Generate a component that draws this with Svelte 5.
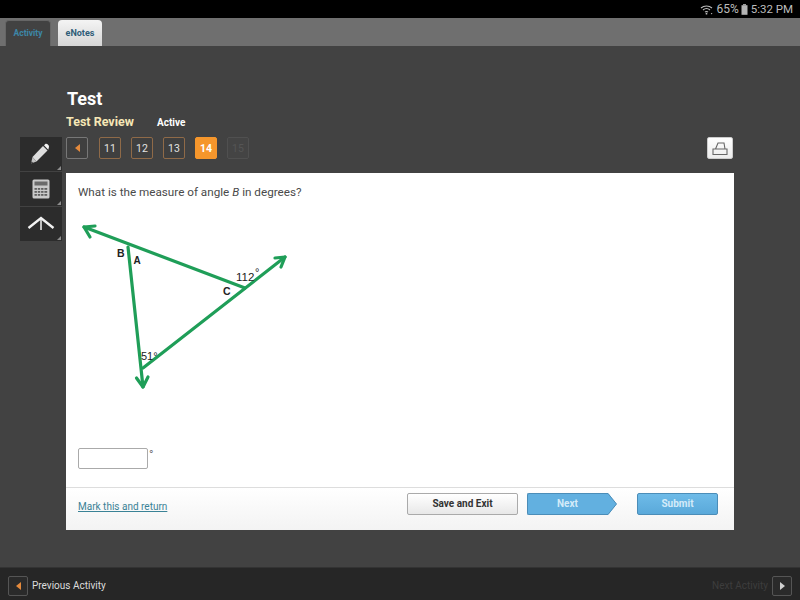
<script>
  const pages = [
    { n: 11, cls: '' },
    { n: 12, cls: '' },
    { n: 13, cls: '' },
    { n: 14, cls: 'current' },
    { n: 15, cls: 'locked' }
  ];
</script>

<div class="screen">
  <header class="status">
    <svg class="wifi" viewBox="0 0 14 11" width="14" height="11" aria-hidden="true">
      <path d="M1 4 A8.5 8.5 0 0 1 12 4 M3 6 A5.5 5.5 0 0 1 10 6 M5 8 A2.6 2.6 0 0 1 8 8" fill="none" stroke="#bdbdbd" stroke-width="1.1"/>
      <circle cx="6.5" cy="9.7" r="0.9" fill="#bdbdbd"/>
      <circle cx="11.6" cy="9.6" r="0.7" fill="#bdbdbd"/>
    </svg>
    <span class="pct">65%</span>
    <svg class="batt" viewBox="0 0 7 11" width="7" height="11" aria-hidden="true">
      <rect x="2" y="0" width="3" height="1.4" fill="#9c9c9c"/>
      <rect x="0.5" y="1.2" width="6" height="9.6" fill="#b5b5b5"/>
    </svg>
    <span class="clock">5:32 PM</span>
  </header>

  <nav class="tabs">
    <div class="tab active">Activity</div>
    <div class="tab light">eNotes</div>
  </nav>

  <main class="main">
    <aside class="tools">
      <div class="tool">
        <svg viewBox="0 0 22 22" width="22" height="22" aria-hidden="true">
          <path d="M6.500 18.500 L17.500 7.500 L13 3 L2.500 14 Z" fill="#dedede"/>
          <path d="M14 2.200 L15.600 0.800 Q16.800 0.400 18.600 2.200 Q19.400 3.800 18.700 5 L18.300 6.700 Z" fill="#f4f4f4"/>
          <path d="M2.500 14 L6.500 18.500 L1 20.500 Z" fill="#c4c4c4"/>
          <path d="M1.700 18.500 L3 19.600 L1 20.500 Z" fill="#222"/>
        </svg>
      </div>
      <div class="tool">
        <svg viewBox="0 0 18 20" width="18" height="20" aria-hidden="true">
          <rect x="0.5" y="0.5" width="17" height="19" rx="1.5" fill="#c9c9c9"/>
          <rect x="2.5" y="2.500" width="13" height="4" fill="#6a6a6a"/>
          <g fill="#5f5f5f">
            <rect x="2.5" y="9" width="2.4" height="1.8"/><rect x="5.8" y="9" width="2.4" height="1.8"/><rect x="9.1" y="9" width="2.4" height="1.8"/><rect x="12.4" y="9" width="2.8" height="1.8"/>
            <rect x="2.5" y="12" width="2.4" height="1.8"/><rect x="5.8" y="12" width="2.4" height="1.8"/><rect x="9.1" y="12" width="2.4" height="1.8"/><rect x="12.4" y="12" width="2.8" height="1.8"/>
            <rect x="2.5" y="15" width="2.4" height="1.8"/><rect x="5.8" y="15" width="2.4" height="1.8"/><rect x="9.1" y="15" width="2.4" height="1.8"/><rect x="12.4" y="15" width="2.8" height="1.8"/>
          </g>
        </svg>
      </div>
      <div class="tool">
        <svg class="peak" viewBox="0 0 28 16" width="28" height="16" aria-hidden="true">
          <path d="M1.500 13 L14 3 L26.500 13" fill="none" stroke="#f2f2f2" stroke-width="2.400"/>
          <path d="M14 3 V15" stroke="#f2f2f2" stroke-width="1.500"/>
        </svg>
      </div>
    </aside>

    <section class="content">
      <h1>Test</h1>
      <div class="subtitle">
        <span class="review">Test Review</span>
        <span class="state">Active</span>
      </div>

      <div class="pager">
        <button class="page back" aria-label="Previous question"><span class="tri left"></span></button>
        {#each pages as p}
          <button class="page {p.cls}">{p.n}</button>
        {/each}
        <button class="print" aria-label="Print">
          <svg viewBox="0 0 16 13" width="16" height="13" aria-hidden="true">
            <path d="M1 7 H15 V12.500 H1 Z M3.500 7 L6 1 H12 L13 7" fill="none" stroke="#666" stroke-width="1.100"/>
          </svg>
        </button>
      </div>

      <div class="card">
        <div class="body">
          <p class="question">What is the measure of angle <em>B</em> in degrees?</p>
          <svg class="figure" viewBox="0 0 215 176" width="215" height="176" role="img" aria-label="Triangle with angles labelled">
            <g transform="translate(-75,-222)" fill="none" stroke="#1f9e58" stroke-width="3.200" stroke-linecap="round" stroke-linejoin="round">
              <path d="M84 227 L245 288"/>
              <path d="M143 368 L285 257"/>
              <path d="M128 247 L143 387"/>
              <path d="M95 226 L84 227 L90 237"/>
              <path d="M275 258 L285 257 L281 267"/>
              <path d="M136.500 378 L143 387 L148 377"/>
              <g stroke="none" fill="#222" font-family="'Liberation Sans', Arial, sans-serif">
                <text x="117" y="257" font-size="10.500" font-weight="700">B</text>
                <text x="133.500" y="264" font-size="10" font-weight="700">A</text>
                <text x="223" y="295" font-size="10.500" font-weight="700">C</text>
                <text x="236" y="281" font-size="11.500">112</text>
                <text x="255" y="276" font-size="11">°</text>
                <text x="141" y="360" font-size="11">51°</text>
              </g>
            </g>
          </svg>
          <div class="answer">
            <div class="input"></div><span class="deg">°</span>
          </div>
        </div>
        <div class="foot">
          <a class="mark" href="#mark">Mark this and return</a>
          <div class="actions">
            <button class="btn save">Save and Exit</button>
            <button class="btn next">
              Next
              <svg class="nose" viewBox="0 0 10 22" width="10" height="22" preserveAspectRatio="none" aria-hidden="true">
                <path d="M0 0 L1 0 L9.500 11 L1 22 L0 22 Z" fill="#62b0e0"/>
                <path d="M0 0.500 L1 0.500 L9.500 11 L1 21.500 L0 21.500" fill="none" stroke="#4b8db8"/>
              </svg>
            </button>
            <button class="btn submit">Submit</button>
          </div>
        </div>
      </div>
    </section>
  </main>

  <footer class="bottom">
    <button class="square" aria-label="Previous activity"><span class="tri left"></span></button>
    <span class="prev">Previous Activity</span>
    <span class="nextlabel">Next Activity</span>
    <button class="square" aria-label="Next activity"><span class="tri right"></span></button>
  </footer>
</div>

<style>
  :global(body) {
    margin: 0;
    background: #424242;
  }
  .screen {
    width: 800px;
    height: 600px;
    display: flex;
    flex-direction: column;
    overflow: hidden;
    font-family: Roboto, "Liberation Sans", Arial, sans-serif;
    background: #424242;
    color: #fff;
  }
  button {
    font-family: inherit;
    padding: 0;
    margin: 0;
  }

  .status {
    height: 18px;
    flex: none;
    background: #000;
    color: #bdbdbd;
    font-size: 11.500px;
    display: flex;
    align-items: center;
    justify-content: flex-end;
    padding-right: 7px;
    box-sizing: border-box;
  }
  .pct { margin: 0 2px 0 2px; font-size: 12px; }
  .clock { margin-left: 3px; }

  .tabs {
    height: 28px;
    flex: none;
    background: #6f6f6f;
    display: flex;
    align-items: flex-end;
    padding-left: 5px;
    gap: 7px;
  }
  .tab {
    height: 26px;
    box-sizing: border-box;
    border-radius: 4px 4px 0 0;
    font-size: 8.500px;
    font-weight: 700;
    display: flex;
    align-items: center;
    justify-content: center;
    padding-bottom: 1px;
  }
  .tab.active {
    width: 46px;
    background: #424242;
    color: #3d87a8;
    border: 1px solid #666;
    border-bottom: 0;
  }
  .tab.light {
    width: 44px;
    background: linear-gradient(#f4f4f4, #d6d6d6);
    color: #2f5d78;
    font-size: 9px;
  }

  .main {
    flex: 1;
    display: flex;
    padding-left: 20px;
    min-height: 0;
  }
  .tools {
    width: 42px;
    margin-top: 91px;
    margin-right: 4px;
    display: flex;
    flex-direction: column;
    gap: 1px;
  }
  .tool {
    height: 34px;
    background: #2c2c2c;
    position: relative;
    display: flex;
    align-items: center;
    justify-content: center;
  }
  .peak { margin-bottom: 3px; }
  .tool::after {
    content: "";
    position: absolute;
    right: 1px;
    bottom: 1px;
    border-left: 4px solid transparent;
    border-bottom: 4px solid #8d8d8d;
  }

  .content {
    width: 668px;
    padding-top: 42px;
  }
  h1 {
    margin: 0 0 0 1px;
    font-size: 18px;
    line-height: 21px;
    font-weight: 700;
    color: #fff;
  }
  .subtitle {
    display: flex;
    align-items: baseline;
    margin-top: 5px;
    height: 16px;
    line-height: 16px;
  }
  .review {
    font-size: 12.500px;
    font-weight: 700;
    color: #f6e7b6;
    width: 91px;
  }
  .state {
    font-size: 10px;
    font-weight: 700;
    color: #fff;
  }

  .pager {
    display: flex;
    align-items: center;
    margin-top: 7px;
    height: 22px;
    gap: 10px;
  }
  .page {
    width: 22px;
    height: 22px;
    box-sizing: border-box;
    border: 1px solid #8f6a48;
    border-radius: 2px;
    background: #3f3f3f;
    color: #e2e2e2;
    font-size: 10.500px;
    font-weight: 400;
    display: flex;
    align-items: center;
    justify-content: center;
  }
  .page.back {
    border-color: #777;
    margin-right: 1px;
  }
  .page.current {
    background: #f5962c;
    border-color: #f5962c;
    color: #fff;
    font-weight: 700;
  }
  .page.locked {
    border-color: #505050;
    color: #555;
    background: #444;
  }
  .print {
    margin-left: auto;
    margin-right: 1px;
    width: 26px;
    height: 22px;
    border: 1px solid #ccc;
    border-radius: 2px;
    background: linear-gradient(#fff, #ececec);
    display: flex;
    align-items: center;
    justify-content: center;
  }

  .tri {
    display: block;
    width: 0;
    height: 0;
    border-top: 4px solid transparent;
    border-bottom: 4px solid transparent;
  }
  .tri.left { border-right: 5px solid #e58a3c; }
  .tri.right { border-left: 5px solid #cfcfcf; }

  .card {
    margin-top: 14px;
    height: 357px;
    background: #fff;
    display: flex;
    flex-direction: column;
    color: #444;
  }
  .body {
    flex: 1;
    padding: 12px 12px 0;
    position: relative;
  }
  .question {
    margin: 0;
    font-size: 11.700px;
    line-height: 15px;
    color: #4a4a4a;
  }
  .figure {
    display: block;
    margin-top: 22px;
    margin-left: -3px;
  }
  .answer {
    display: flex;
    align-items: flex-start;
    margin-top: 50px;
  }
  .input {
    width: 70px;
    height: 21px;
    box-sizing: border-box;
    border: 1px solid #aaa;
    border-radius: 2px;
    background: #fff;
  }
  .deg {
    font-size: 12px;
    line-height: 14px;
    color: #777;
    margin-left: 1px;
  }
  .foot {
    height: 43px;
    flex: none;
    box-sizing: border-box;
    border-top: 1px solid #ddd;
    background: linear-gradient(#fff, #f3f3f3);
    display: flex;
    align-items: center;
    justify-content: space-between;
    padding: 0 16px 5px 12px;
  }
  .mark {
    font-size: 10px;
    color: #3a8296;
    text-decoration: underline;
  }
  .actions {
    display: flex;
    align-items: center;
    gap: 10px;
    margin-bottom: 6px;
  }
  .btn {
    height: 22px;
    box-sizing: border-box;
    border-radius: 2px;
    font-size: 10px;
    font-weight: 700;
    display: flex;
    align-items: center;
    justify-content: center;
  }
  .save {
    width: 111px;
    margin-right: -1px;
    border: 1px solid #aaa;
    background: linear-gradient(#fff, #e8e8e8);
    color: #333;
  }
  .next {
    position: relative;
    width: 80px;
    margin-right: 20px;
    border: 1px solid #4b8db8;
    border-right: 0;
    border-radius: 2px 0 0 2px;
    background: #62b0e0;
    color: #d4ebf9;
  }
  .nose {
    position: absolute;
    left: 100%;
    top: -1px;
  }
  .submit {
    width: 81px;
    border: 1px solid #4b8db8;
    background: linear-gradient(#6ebbe8, #5aa9da);
    color: #d4ebf9;
  }

  .bottom {
    height: 33px;
    flex: none;
    box-sizing: border-box;
    background: #262626;
    border-top: 1px solid #333;
    display: flex;
    align-items: center;
    padding: 3px 8px 0;
  }
  .square {
    width: 20px;
    height: 20px;
    box-sizing: border-box;
    border: 1px solid #555;
    border-radius: 2px;
    background: #2a2a2a;
    display: flex;
    align-items: center;
    justify-content: center;
  }
  .prev {
    margin-left: 4px;
    font-size: 10px;
    color: #dcdcdc;
  }
  .nextlabel {
    margin-left: auto;
    margin-right: 4px;
    font-size: 10px;
    color: #3d3d3d;
  }
</style>
